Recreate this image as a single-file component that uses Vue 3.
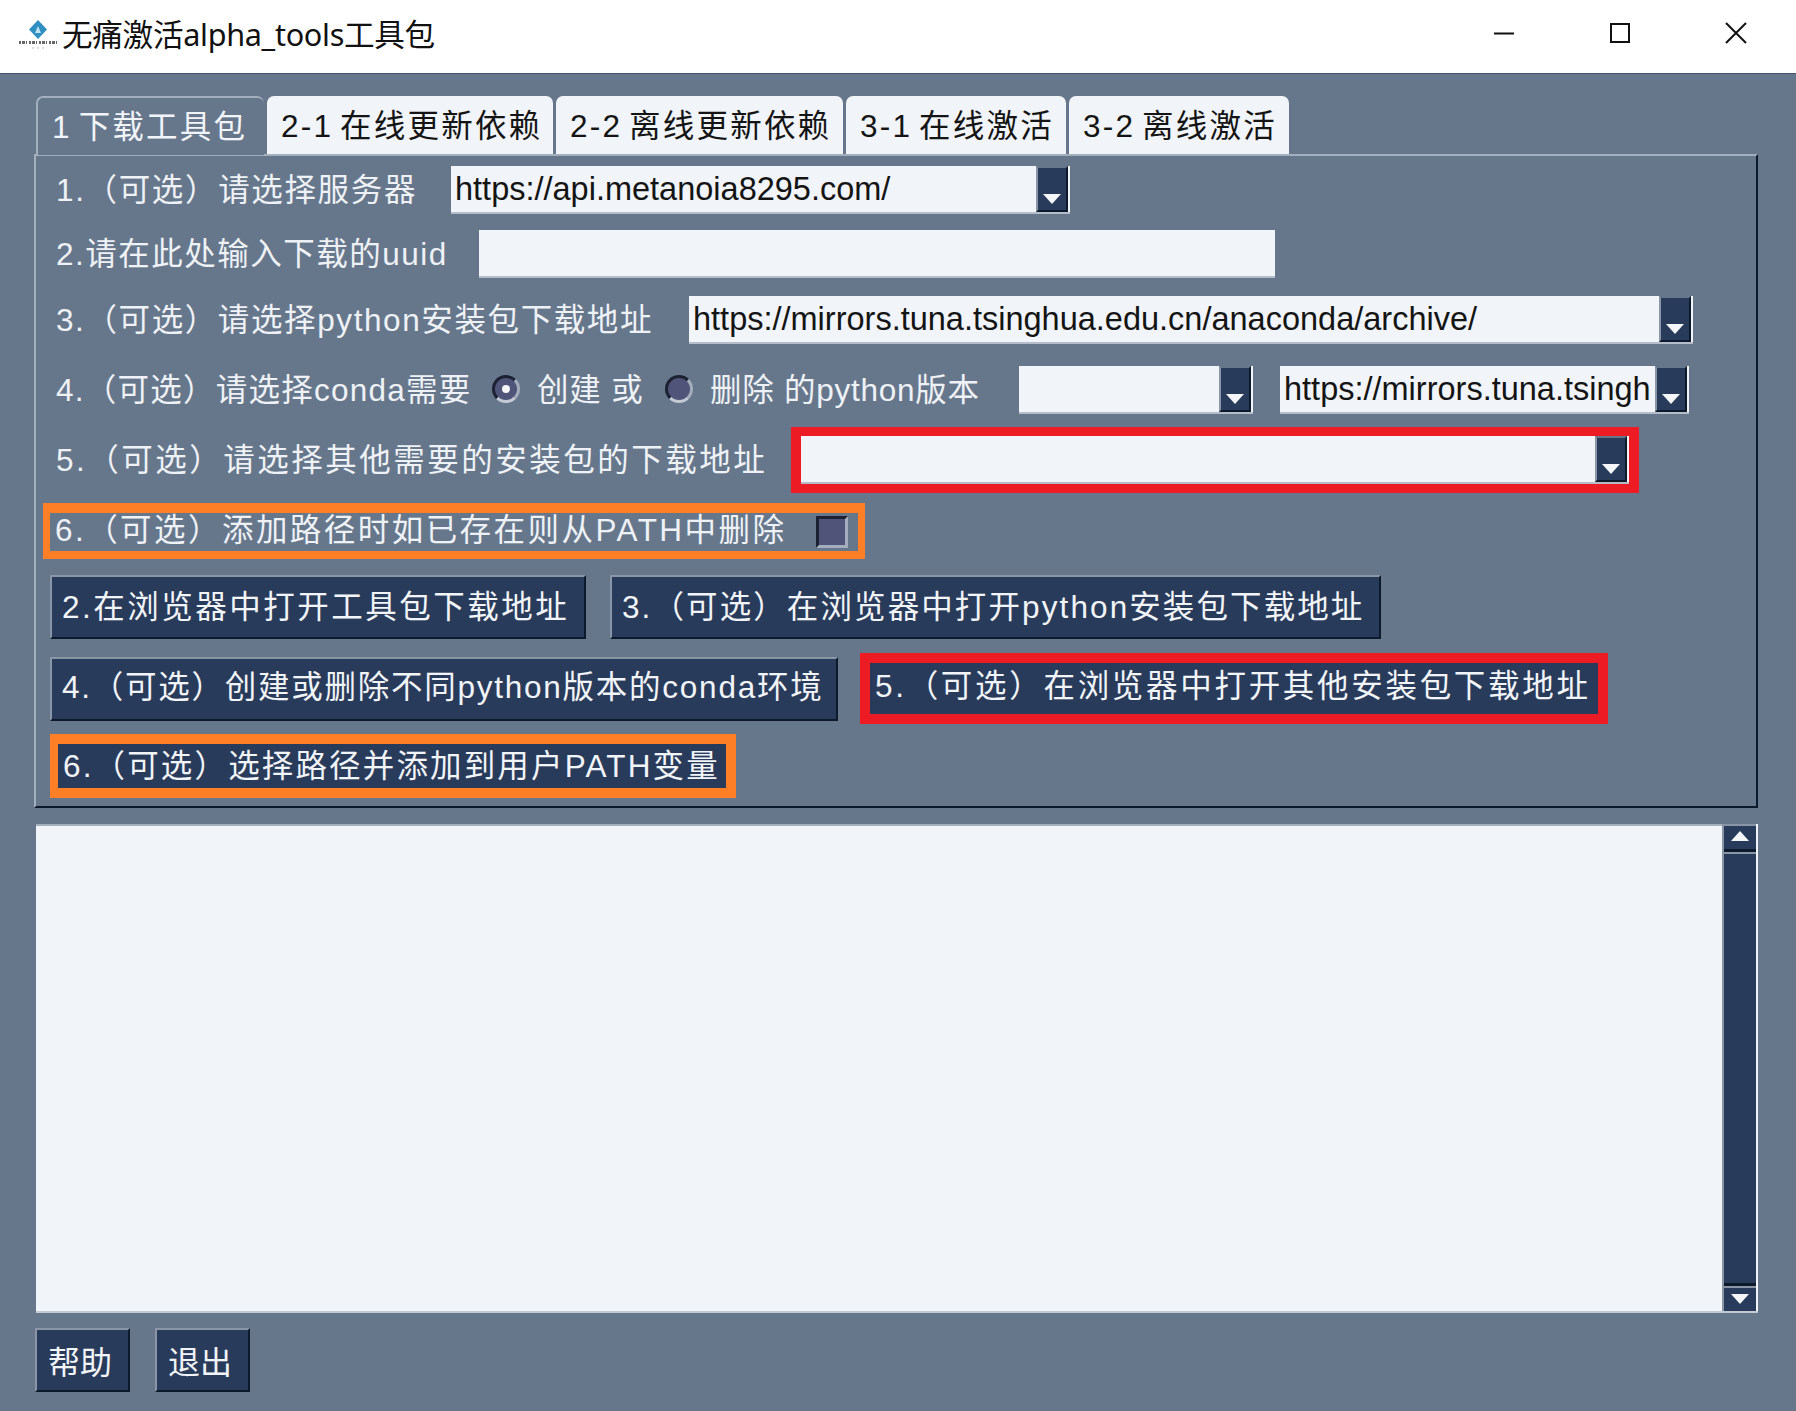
<template>
  <div class="window">
    <header class="titlebar">
      <svg class="logo" width="44" height="40" viewBox="0 0 44 40">
        <path d="M21 7 L30 16.5 L21 26 L12 16.5 Z" fill="#2f8fc0" />
        <path d="M21 13 L24 20 H18 Z" fill="#bfe3f2" />
        <path d="M2 29.5 H42" stroke="#666" stroke-width="3" stroke-dasharray="2 1 3 1 1 2" />
        <path d="M15 35 H27" stroke="#bbb" stroke-width="1" stroke-dasharray="2 3" />
      </svg>
      <span class="title">无痛激活alpha_tools工具包</span>
      <div class="controls">
        <svg width="22" height="22" viewBox="0 0 22 22"><path d="M1 11.5 H21" stroke="#111" stroke-width="2" /></svg>
        <svg width="22" height="22" viewBox="0 0 22 22"><rect x="2" y="2" width="18" height="18" fill="none" stroke="#111" stroke-width="2" /></svg>
        <svg width="22" height="22" viewBox="0 0 22 22"><path d="M1 1 L21 21 M21 1 L1 21" stroke="#111" stroke-width="2" /></svg>
      </div>
    </header>

    <main class="body">
      <div class="tabs">
        <div
          v-for="(tab, index) in tabs"
          :key="tab.name"
          class="tab"
          :class="{ active: index === 0 }"
          :style="{ width: `${tab.width}px` }"
        >{{ tab.name }}</div>
      </div>

      <section class="panel">
        <div class="row row-1">
          <span class="label l1">1.（可选）请选择服务器</span>
          <div class="combo c1">
            <span class="combo-text">https://api.metanoia8295.com/</span>
            <span class="combo-btn"></span>
          </div>
        </div>

        <div class="row row-2">
          <span class="label l2">2.请在此处输入下载的uuid</span>
          <div class="entry"></div>
        </div>

        <div class="row row-3">
          <span class="label l3">3.（可选）请选择python安装包下载地址</span>
          <div class="combo c3">
            <span class="combo-text">https://mirrors.tuna.tsinghua.edu.cn/anaconda/archive/</span>
            <span class="combo-btn"></span>
          </div>
        </div>

        <div class="row row-4">
          <span class="label l4">4.（可选）请选择conda需要</span>
          <span class="radio on"></span>
          <span class="label l4b">创建 或</span>
          <span class="radio"></span>
          <span class="label l4c">删除 的python版本</span>
          <div class="combo c4a">
            <span class="combo-text"></span>
            <span class="combo-btn"></span>
          </div>
          <div class="combo c4b">
            <span class="combo-text">https://mirrors.tuna.tsingh</span>
            <span class="combo-btn"></span>
          </div>
        </div>

        <div class="row row-5">
          <span class="label l5">5.（可选）请选择其他需要的安装包的下载地址</span>
          <div class="frame red">
            <div class="combo c5">
              <span class="combo-text"></span>
              <span class="combo-btn"></span>
            </div>
          </div>
        </div>

        <div class="row row-6">
          <div class="frame orange check-frame">
            <span class="label l6">6.（可选）添加路径时如已存在则从PATH中删除</span>
            <span class="check"></span>
          </div>
        </div>

        <div class="row row-7">
          <button class="btn b1">2.在浏览器中打开工具包下载地址</button>
          <button class="btn b2">3.（可选）在浏览器中打开python安装包下载地址</button>
        </div>

        <div class="row row-8">
          <button class="btn b3">4.（可选）创建或删除不同python版本的conda环境</button>
          <div class="frame red btn-red">
            <button class="btn flat b4">5.（可选）在浏览器中打开其他安装包下载地址</button>
          </div>
        </div>

        <div class="row row-9">
          <div class="frame orange btn-orange">
            <button class="btn flat b5">6.（可选）选择路径并添加到用户PATH变量</button>
          </div>
        </div>
      </section>

      <section class="log">
        <div class="log-text"></div>
        <div class="scrollbar">
          <span class="arrow up"></span>
          <span class="track"></span>
          <span class="arrow down"></span>
        </div>
      </section>

      <footer class="footer">
        <button class="btn small">帮助</button>
        <button class="btn small">退出</button>
      </footer>
    </main>
  </div>
</template>

<script setup>
const tabs = [
  { name: "1 下载工具包", width: 228 },
  { name: "2-1 在线更新依赖", width: 286 },
  { name: "2-2 离线更新依赖", width: 287 },
  { name: "3-1 在线激活", width: 220 },
  { name: "3-2 离线激活", width: 220 },
];
</script>

<style>
html,
body {
  margin: 0;
  background: #66778c;
}
</style>

<style scoped>
.window {
  width: 1796px;
  height: 1411px;
  overflow: hidden;
  background: #66778c;
  font-family: "Liberation Sans", "Noto Sans CJK SC", sans-serif;
  font-size: 31.5px;
}

.titlebar {
  height: 65px;
  padding-bottom: 8px;
  display: flex;
  align-items: center;
  background: #fff;
  border-bottom: 1px solid #44566a;
  padding-left: 17px;
}

.logo {
  margin-right: 1px;
}

.title {
  font-family: "Noto Sans", "Noto Sans CJK SC", sans-serif;
  font-size: 30.6px;
  color: #111;
  letter-spacing: -0.3px;
}

.controls {
  margin-left: auto;
  display: flex;
  gap: 94px;
  padding-right: 49px;
}

.body {
  padding: 21px 38px 0 34px;
}

.tabs {
  display: flex;
  height: 59px;
  margin-left: 2px;
  gap: 3px;
  align-items: flex-end;
}

.tab {
  height: 58px;
  box-sizing: border-box;
  padding: 11px 0 0 14px;
  background: #f1f4f8;
  color: #141414;
  border-radius: 7px 7px 0 0;
  white-space: nowrap;
  letter-spacing: 2.2px;
  word-spacing: -4px;
  line-height: 38px;
}

.tab.active {
  background: #66778c;
  color: #f1f4f8;
  border-top: 2px solid #a3afbd;
  border-left: 2px solid #a3afbd;
  height: 59px;
  padding: 10px 0 0 14px;
  margin-bottom: -1px;
  position: relative;
  z-index: 1;
}

.panel {
  height: 654px;
  box-sizing: border-box;
  padding: 10px 0 0 10px;
  border-top: 2px solid #a3afbd;
  border-left: 2px solid #a3afbd;
  border-right: 2px solid #0d1a2c;
  border-bottom: 2px solid #0d1a2c;
}

.row {
  display: flex;
  align-items: center;
  white-space: nowrap;
}

.row-1 { height: 48px; }
.row-2 { height: 48px; margin-top: 16px; }
.row-3 { height: 48px; margin-top: 18px; }
.row-4 { height: 48px; margin-top: 22px; }
.row-5 { height: 66px; margin-top: 13px; }
.row-6 { height: 56px; margin-top: 10px; }
.row-7 { height: 64px; margin-top: 16px; }
.row-8 { height: 71px; margin-top: 14px; }
.row-9 { height: 64px; margin-top: 10px; }

.label {
  color: #eef1f5;
  padding-left: 2px;
  padding-bottom: 6px;
  flex: none;
}

.l1 { width: 395px; margin-left: 8px; letter-spacing: 1.65px; }
.l2 { width: 423px; margin-left: 8px; letter-spacing: 1.5px; }
.l3 { width: 633px; margin-left: 8px; letter-spacing: 1.6px; }
.l4 { width: 436px; margin-left: 8px; letter-spacing: 1.25px; }
.l4b { width: 128px; margin-left: 13px; letter-spacing: 0.8px; padding-left: 4px; }
.l4c { width: 309px; margin-left: 15px; letter-spacing: 0.75px; padding-left: 2px; }
.l5 { width: 722px; margin-left: 8px; letter-spacing: 2.5px; }
.l6 { width: 760px; letter-spacing: 2.45px; padding-left: 5px; padding-bottom: 10px; }

.combo {
  display: flex;
  flex: none;
  height: 48px;
  box-sizing: border-box;
  padding-right: 2px;
  background: #f1f4f8;
  border-bottom: 2px solid #b4bdc9;
  overflow: hidden;
}

.combo-text {
  flex: 1;
  min-width: 0;
  overflow: hidden;
  padding-left: 4px;
  line-height: 46px;
  font-size: 32.5px;
  color: #141414;
}

.combo-btn {
  position: relative;
  flex: none;
  width: 32px;
  background: #293b5a;
  border-top: 2px solid #66778c;
  border-left: 2px solid #8a96a6;
  border-right: 2px solid #0d1a2c;
  border-bottom: 2px solid #0d1a2c;
  box-sizing: border-box;
}

.combo-btn::after {
  content: "";
  position: absolute;
  left: 5px;
  bottom: 6px;
  border-top: 10px solid #f4f6f9;
  border-left: 9px solid transparent;
  border-right: 9px solid transparent;
}

.c1 { width: 619px; }
.c3 { width: 1004px; }
.c4a { width: 234px; }
.c4b { width: 409px; margin-left: 27px; }
.c5 { width: 828px; }

.entry {
  flex: none;
  width: 796px;
  height: 48px;
  box-sizing: border-box;
  background: #f1f4f8;
  border-bottom: 2px solid #b4bdc9;
}

.radio {
  flex: none;
  box-sizing: border-box;
  width: 28px;
  height: 28px;
  margin-bottom: 2px;
  border-radius: 50%;
  background: #4f5478;
  border: 3px solid;
  border-color: #1c2233 #a3adbb #c3cad4 #1c2233;
  display: flex;
  align-items: center;
  justify-content: center;
}

.radio.on::after {
  content: "";
  width: 8px;
  height: 8px;
  border-radius: 50%;
  background: #f4f6f9;
}

.frame {
  flex: none;
  box-sizing: border-box;
  display: flex;
  align-items: center;
}

.red {
  border: 10px solid #ed1c24;
}

.orange {
  border: 10px solid #ff7f27;
}

.row-5 .frame {
  height: 66px;
  width: 848px;
  margin-left: 13px;
}

.check-frame {
  width: 822px;
  height: 56px;
  margin-left: -3px;
  border-width: 10px 7px 8px 7px;
}

.check {
  flex: none;
  box-sizing: border-box;
  width: 32px;
  height: 32px;
  background: #4f5478;
  border: 3px solid;
  border-color: #1c2233 #a3adbb #a3adbb #1c2233;
  margin-left: 1px;
}

.btn {
  flex: none;
  box-sizing: border-box;
  margin: 0;
  height: 64px;
  font: inherit;
  color: #f1f4f8;
  background: #293b5a;
  border: 2px solid;
  border-color: #8a96a6 #0d1a2c #0d1a2c #8a96a6;
  white-space: nowrap;
  text-align: left;
  padding: 0 0 6px 10px;
}

.b1 { width: 536px; margin-left: 4px; letter-spacing: 2.5px; }
.b2 { width: 771px; margin-left: 24px; letter-spacing: 2.1px; }
.b3 { width: 788px; margin-left: 4px; letter-spacing: 1.75px; padding-bottom: 10px; }

.btn-red {
  width: 748px;
  height: 71px;
  margin-left: 22px;
}

.btn.flat {
  border: 0;
  height: 100%;
  width: 100%;
  padding-left: 5px;
  line-height: 32px;
}

.btn.b4 { letter-spacing: 2.7px; padding-bottom: 6px; }
.btn.b5 { letter-spacing: 2.15px; padding-bottom: 0; }

.btn-orange {
  width: 686px;
  height: 64px;
  margin-left: 4px;
  border-width: 10px 10px 10px 8px;
}

.log {
  display: flex;
  height: 489px;
  margin: 16px 0 0 2px;
  box-sizing: border-box;
  border-bottom: 2px solid #c3cad4;
}

.log-text {
  flex: 1;
  background: #f1f4f8;
  border-top: 2px solid #a3afbd;
}

.scrollbar {
  flex: none;
  width: 36px;
  display: flex;
  flex-direction: column;
  box-sizing: border-box;
  border-left: 2px solid #8a96a6;
  border-right: 2px solid #f1f4f8;
  background: #0d1a2c;
}

.arrow {
  flex: none;
  position: relative;
  height: 25px;
  background: #293b5a;
  border-top: 2px solid #8a96a6;
  box-sizing: border-box;
}

.arrow::after {
  content: "";
  position: absolute;
  left: 7px;
  border-left: 9px solid transparent;
  border-right: 9px solid transparent;
}

.arrow.up::after {
  top: 5px;
  border-bottom: 10px solid #f4f6f9;
}

.arrow.down::after {
  top: 6px;
  border-top: 10px solid #f4f6f9;
}

.track {
  flex: 1;
  margin: 3px 0;
  background: #293b5a;
  border-top: 2px solid #8a96a6;
}

.footer {
  display: flex;
  gap: 25px;
  margin: 15px 0 0 1px;
}

.btn.small {
  width: 95px;
  padding: 0 0 0 11px;
  font-size: 32px;
}
</style>
